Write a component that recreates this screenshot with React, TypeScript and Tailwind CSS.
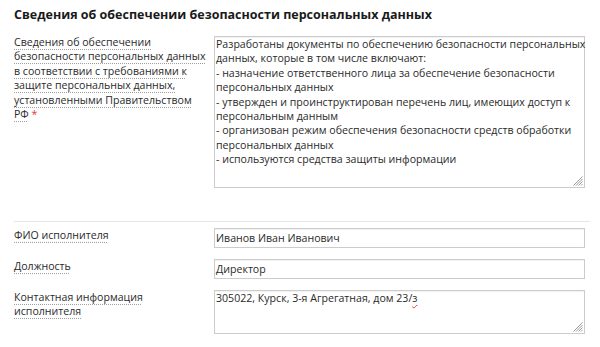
import React from "react";

function Grip() {
  return (
    <svg
      className="absolute right-[1px] bottom-[1px]"
      width="11"
      height="11"
      viewBox="0 0 11 11"
    >
      <g stroke="#9a9a9a" strokeWidth="1">
        <line x1="10.5" y1="1.5" x2="1.5" y2="10.5" />
        <line x1="10.5" y1="4" x2="4" y2="10.5" />
        <line x1="10.5" y1="6.5" x2="6.5" y2="10.5" />
        <line x1="10.5" y1="9" x2="9" y2="10.5" />
      </g>
    </svg>
  );
}

function U({ children }: { children: React.ReactNode }) {
  return (
    <span className="underline decoration-dotted decoration-[#a0a0a0] underline-offset-[3px]">
      {children}
    </span>
  );
}

const lines = [
  "Разработаны документы по обеспечению безопасности персональных",
  "данных, которые в том числе включают:",
  "- назначение ответственного лица за обеспечение безопасности",
  "персональных данных",
  "- утвержден и проинструктирован перечень лиц, имеющих доступ к",
  "персональным данным",
  "- организован режим обеспечения безопасности средств обработки",
  "персональных данных",
  "- используются средства защиты информации",
];

const labelLines = [
  "Сведения об обеспечении",
  "безопасности персональных данных",
  "в соответствии с требованиями к",
  "защите персональных данных,",
  "установленными Правительством",
];

const box =
  "border border-[#cccccc] px-[1px] shadow-[inset_0_1px_1px_rgba(0,0,0,0.06)]";

export default function App() {
  return (
    <div className="w-[600px] h-[347px] overflow-hidden bg-white pl-[14px] pr-[10px] pt-[5px] font-['Open_Sans',sans-serif] text-[10.6px] leading-[14.4px] text-[#2a2a2a]">
      <h2 className="text-[12.5px] leading-[20px] font-bold text-[#1a1a1a]">
        Сведения об обеспечении безопасности персональных данных
      </h2>

      <div className="mt-[10px] flex">
        <div className="w-[200px] shrink-0 pr-[4px]">
          {labelLines.map((l, i) => (
            <div key={i} className="whitespace-nowrap">
              <U>{l}</U>
            </div>
          ))}
          <div className="whitespace-nowrap">
            <U>РФ</U>
            <span className="text-[#e53935]"> *</span>
          </div>
        </div>
        <div className={`relative mt-[1px] h-[152px] w-[371px] ${box}`}>
          {lines.map((l, i) => (
            <div key={i} className="whitespace-nowrap">
              {l}
            </div>
          ))}
          <Grip />
        </div>
      </div>

      <div className="mt-[33px] border-t border-[#e6e6e6]" />

      <div className="mt-[6px] flex flex-col gap-[11px]">
        <div className="flex">
          <div className="w-[200px] shrink-0 pr-[4px]">
            <U>ФИО исполнителя</U>
          </div>
          <div className={`flex h-[20px] w-[371px] items-center ${box}`}>
            Иванов Иван Иванович
          </div>
        </div>
        <div className="flex">
          <div className="w-[200px] shrink-0 pr-[4px]">
            <U>Должность</U>
          </div>
          <div className={`flex h-[20px] w-[371px] items-center ${box}`}>
            Директор
          </div>
        </div>
        <div className="flex">
          <div className="w-[200px] shrink-0 pr-[4px]">
            <div>
              <U>Контактная информация</U>
            </div>
            <div>
              <U>исполнителя</U>
            </div>
          </div>
          <div className={`relative h-[44px] w-[371px] ${box}`}>
            305022, Курск, 3-я Агрегатная, дом 23/
            <span className="underline decoration-wavy decoration-[#e53935] decoration-[1px] underline-offset-[2px]">
              з
            </span>
            <Grip />
          </div>
        </div>
      </div>
    </div>
  );
}
